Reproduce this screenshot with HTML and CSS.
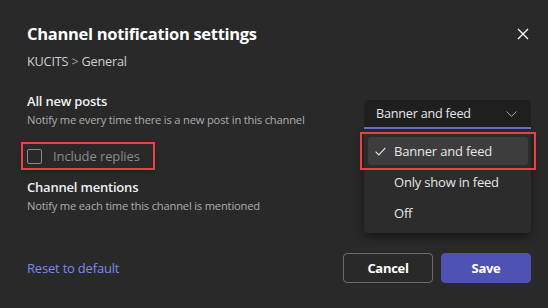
FILE: index.html
```html
<!DOCTYPE html>
<html lang="en">
<head>
    <meta charset="UTF-8">
    <meta name="viewport" content="width=device-width, initial-scale=1.0">
    <title>Channel notification settings</title>
    <link rel="stylesheet" href="styles.css">
</head>
<body>
    <div class="dialog">
        <div class="dialog-header">
            <h1>Channel notification settings</h1>
            <button class="close" aria-label="Close">
                <svg width="12" height="12" viewBox="0 0 12 12"><path d="M1 1L11 11M11 1L1 11" stroke="#fff" stroke-width="1.3" fill="none"/></svg>
            </button>
        </div>
        <div class="crumbs">KUCITS <span class="sep">&gt;</span> General</div>

        <div class="setting">
            <div class="setting-text">
                <h2>All new posts</h2>
                <p>Notify me every time there is a new post in this channel</p>
            </div>
            <div class="select">
                <div class="select-box">
                    <span>Banner and feed</span>
                    <svg width="11" height="6" viewBox="0 0 11 6"><path d="M0.5 0.5L5.5 5.3L10.5 0.5" stroke="#a8a8a8" stroke-width="1" fill="none"/></svg>
                </div>
                <ul class="menu">
                    <li class="selected marked">
                        <svg class="check" width="11" height="9" viewBox="0 0 11 9"><path d="M0.6 4.6L3.8 7.9L10.4 0.8" stroke="#e6e6e6" stroke-width="1.1" fill="none"/></svg>
                        Banner and feed
                    </li>
                    <li>Only show in feed</li>
                    <li>Off</li>
                </ul>
            </div>
        </div>

        <label class="check-row">
            <span class="box"></span>
            Include replies
        </label>

        <div class="setting mentions">
            <div class="setting-text">
                <h2>Channel mentions</h2>
                <p>Notify me each time this channel is mentioned</p>
            </div>
        </div>

        <div class="dialog-footer">
            <a href="#" class="reset">Reset to default</a>
            <div class="actions">
                <button class="btn">Cancel</button>
                <button class="btn primary">Save</button>
            </div>
        </div>
    </div>
</body>
</html>
```

FILE: styles.css
```css
body {
    margin: 0;
    background-color: #292929;
    font-family: "Open Sans", "Noto Sans", sans-serif;
    color: #ffffff;
}
.dialog {
    padding: 22px 17px 0 27px;
}
.dialog-header {
    display: flex;
    justify-content: space-between;
    align-items: center;
}
h1 {
    margin: 0;
    font-size: 16.5px;
    line-height: 24px;
    font-weight: 700;
    letter-spacing: -0.3px;
}
.close {
    background: none;
    border: none;
    padding: 0;
    margin-right: 2px;
    width: 12px;
    height: 12px;
    display: flex;
}
.crumbs {
    margin-top: 6px;
    font-size: 12.7px;
    line-height: 18px;
    color: #cfcfcf;
    letter-spacing: -0.2px;
}
.sep {
    color: #a0a0a0;
}
.setting {
    display: flex;
    justify-content: space-between;
    align-items: flex-start;
    margin-top: 21px;
}
h2 {
    margin: 0;
    font-size: 13px;
    line-height: 20px;
    font-weight: 600;
    color: #f0f0f0;
    letter-spacing: -0.2px;
}
.setting-text p {
    margin: 1px 0 0;
    font-size: 11.2px;
    line-height: 16px;
    color: #adadad;
    letter-spacing: -0.2px;
}
.select {
    position: relative;
    width: 167px;
    margin-top: 9px;
}
.select-box {
    display: flex;
    justify-content: space-between;
    align-items: center;
    height: 27px;
    padding: 0 14px 0 12px;
    background-color: #1f1f1f;
    border-radius: 4px 4px 0 0;
    border-bottom: 2px solid #6a6fd0;
    font-size: 12.6px;
    color: #e6e6e6;
    letter-spacing: -0.2px;
}
.menu {
    position: absolute;
    top: 31px;
    left: 0;
    right: 0;
    margin: 0;
    padding: 6px 3px 6px 4px;
    list-style: none;
    background-color: #2c2c2c;
    border-radius: 4px;
    box-shadow: 0 4px 10px rgba(0, 0, 0, 0.45);
    display: flex;
    flex-direction: column;
    gap: 3px;
}
.menu li {
    position: relative;
    height: 28px;
    display: flex;
    align-items: center;
    padding-left: 26px;
    font-size: 13px;
    color: #e6e6e6;
    border-radius: 4px;
    letter-spacing: -0.2px;
}
.menu li.selected {
    background-color: #3d3d3d;
}
.check {
    position: absolute;
    left: 7px;
    top: 10px;
}
.marked::after {
    content: "";
    position: absolute;
    top: -5px;
    bottom: -5px;
    left: -8px;
    right: -8px;
    border: 2px solid #ec4047;
}
.check-row {
    display: flex;
    align-items: center;
    gap: 11px;
    width: 126px;
    height: 24px;
    margin: 15px 0 0 -4px;
    padding-left: 4px;
    outline: 2px solid #ec4047;
    box-shadow: 0 2px 6px rgba(0, 0, 0, 0.4);
    font-size: 13px;
    color: #8c8c8c;
    letter-spacing: -0.1px;
}
.box {
    width: 13px;
    height: 13px;
    border: 1px solid #8a8a8a;
    border-radius: 2px;
}
.mentions {
    margin-top: 9px;
}
.dialog-footer {
    display: flex;
    justify-content: space-between;
    align-items: center;
    margin-top: 39px;
}
.reset {
    font-size: 13px;
    color: #7f85f5;
    text-decoration: none;
    letter-spacing: -0.2px;
}
.actions {
    display: flex;
    gap: 8px;
}
.btn {
    width: 90px;
    height: 30px;
    border: 1px solid #6b6b6b;
    border-radius: 4px;
    background: none;
    color: #ffffff;
    font-family: inherit;
    font-size: 13px;
    font-weight: 700;
    letter-spacing: -0.3px;
}
.btn.primary {
    background-color: #4f52b2;
    border-color: #4f52b2;
}
```
